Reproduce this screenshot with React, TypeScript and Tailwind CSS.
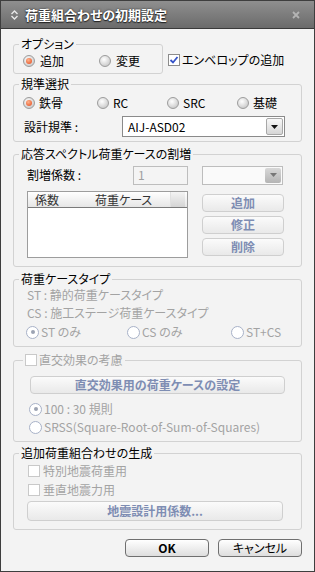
import React from "react";

function Radio({ checked = false, disabled = false }: { checked?: boolean; disabled?: boolean }) {
  if (disabled) {
    return (
      <span className="w-[13px] h-[13px] rounded-full border border-[#a8b2c8] bg-white flex items-center justify-center shrink-0">
        {checked && <span className="w-[4px] h-[4px] rounded-full bg-[#9ca3b3]" />}
      </span>
    );
  }
  return (
    <span className="w-[12px] h-[12px] rounded-full border border-[#9c9c9c] bg-[radial-gradient(circle_at_40%_35%,#ffffff,#bcbcbc)] flex items-center justify-center shrink-0">
      {checked && <span className="w-[6px] h-[6px] rounded-full bg-[radial-gradient(circle_at_40%_35%,#ffb48c,#e2461a)]" />}
    </span>
  );
}

function Check({ checked = false, disabled = false }: { checked?: boolean; disabled?: boolean }) {
  return (
    <span
      className={
        disabled
          ? "w-[12px] h-[12px] border border-[#c9c9c9] bg-white flex items-center justify-center shrink-0"
          : "w-[12px] h-[12px] border border-[#8c8c8c] bg-white flex items-center justify-center shrink-0"
      }
    >
      {checked && (
        <svg width="10" height="10" viewBox="0 0 10 10">
          <path d="M1.5 5 L4 7.5 L8.5 2" fill="none" stroke="#3553c8" strokeWidth="1.8" />
        </svg>
      )}
    </span>
  );
}

function DisabledButton({ children, className }: { children: React.ReactNode; className: string }) {
  return (
    <div
      className={
        "flex items-center justify-center rounded-[4px] border border-[#cfcfcf] bg-linear-to-b from-[#fbfbfb] to-[#e9e9e9] text-[12px] leading-[14px] font-bold text-[#7e8db3] " +
        className
      }
    >
      {children}
    </div>
  );
}

function Arrow({ color }: { color: string }) {
  return (
    <svg width="7" height="4" viewBox="0 0 7 4">
      <path d="M0 0 L7 0 L3.5 4 Z" fill={color} />
    </svg>
  );
}

export default function App() {
  return (
    <div className="w-[315px] h-[572px] border border-[#3e3e3e] bg-[#f3f3f3] flex flex-col font-['Noto_Sans_CJK_JP','Noto_Sans',sans-serif] [font-feature-settings:'palt'] text-[12px] text-black overflow-hidden">
      {/* Title bar */}
      <div className="h-[28px] shrink-0 flex items-center bg-linear-to-b from-[#8f8f8f] to-[#6b6b6b] border-b border-[#3a3a3a] pl-[9px] pr-[9px]">
        <svg width="9" height="12" viewBox="0 0 9 12">
          <path d="M1.5 5 L4.5 2 L7.5 5" fill="none" stroke="#e8e8e8" strokeWidth="1.4" />
          <path d="M1.5 7 L4.5 10 L7.5 7" fill="none" stroke="#e8e8e8" strokeWidth="1.4" />
        </svg>
        <span className="ml-[6px] text-[13px] font-bold text-white leading-none [text-shadow:0_0_2px_#222,0_1px_1px_#222]">
          荷重組合わせの初期設定
        </span>
        <svg className="ml-auto mr-[4px]" width="10" height="10" viewBox="0 0 10 10">
          <path d="M2 2 L8 8 M8 2 L2 8" stroke="#b4b4b4" strokeWidth="1.8" />
        </svg>
      </div>

      <div className="flex flex-col pl-[12px] pr-[12px]">
        {/* Row 1 */}
        <div className="flex items-start mt-[7px]">
          <fieldset className="w-[150px] border border-[#d2d2d2] rounded-[3px]">
            <legend className="ml-[5px] px-[2px] h-[16px] leading-[16px]">オプション</legend>
            <div className="h-[18px] mb-[3px] flex items-center pl-[9px]">
              <div className="w-[76px] flex items-center gap-[5px]">
                <Radio checked />
                <span className="leading-[16px]">追加</span>
              </div>
              <div className="flex items-center gap-[5px]">
                <Radio />
                <span className="leading-[16px]">変更</span>
              </div>
            </div>
          </fieldset>
          <div className="ml-[5px] mt-[15px] h-[18px] flex items-center gap-[2px]">
            <Check checked />
            <span className="leading-[16px]">エンベロップの追加</span>
          </div>
        </div>

        {/* 規準選択 */}
        <fieldset className="mt-[2px] border border-[#d2d2d2] rounded-[3px]">
          <legend className="ml-[5px] px-[2px] h-[16px] leading-[16px]">規準選択</legend>
          <div className="mt-[4px] h-[14px] flex items-center pl-[9px]">
            <div className="w-[74px] flex items-center gap-[4px]">
              <Radio checked />
              <span className="leading-[14px]">鉄骨</span>
            </div>
            <div className="w-[70px] flex items-center gap-[4px]">
              <Radio />
              <span className="leading-[14px]">RC</span>
            </div>
            <div className="w-[70px] flex items-center gap-[4px]">
              <Radio />
              <span className="leading-[14px]">SRC</span>
            </div>
            <div className="flex items-center gap-[4px]">
              <Radio />
              <span className="leading-[14px]">基礎</span>
            </div>
          </div>
          <div className="mt-[6px] mb-[4px] h-[21px] flex items-center pl-[10px]">
            <span className="w-[98px] leading-[16px]">設計規準 :</span>
            <div className="w-[163px] h-[21px] border border-[#8a8a8a] bg-white flex items-center">
              <span className="flex-1 pl-[5px] leading-[16px]">AIJ-ASD02</span>
              <span className="w-[17px] h-[17px] mr-[1px] border border-[#a8a8a8] rounded-[2px] bg-linear-to-b from-[#f8f8f8] to-[#d6d6d6] flex items-center justify-center">
                <Arrow color="#111" />
              </span>
            </div>
          </div>
        </fieldset>

        {/* 応答スペクトル */}
        <fieldset className="mt-[4px] border border-[#d2d2d2] rounded-[3px]">
          <legend className="ml-[5px] px-[2px] h-[16px] leading-[16px]">応答スペクトル荷重ケースの割増</legend>
          <div className="mt-[4px] h-[18px] flex items-center pl-[13px]">
            <span className="w-[106px] leading-[16px]">割増係数 :</span>
            <div className="w-[55px] h-[19px] border border-[#bdbdbd] bg-[#f4f4f4] flex items-center pl-[4px] leading-[16px] text-[#a0a0a0]">1</div>
            <div className="ml-[14px] w-[81px] h-[19px] border border-[#bdbdbd] bg-[#fafafa] flex items-center justify-end">
              <span className="w-[16px] h-[15px] mr-[1px] rounded-[2px] bg-linear-to-b from-[#d8d8d8] to-[#b4b4b4] flex items-center justify-center">
                <Arrow color="#777" />
              </span>
            </div>
          </div>
          <div className="mt-[7px] mb-[8px] flex items-start pl-[13px]">
            <div className="w-[161px] h-[67px] border border-[#9d9d9d] bg-white">
              <div className="h-[16px] flex items-stretch border-b border-[#7a7a7a] bg-linear-to-b from-[#ffffff] to-[#e6e6e6]">
                <span className="w-[59px] pl-[7px] leading-[15px] text-[#333]">係数</span>
                <span className="w-[83px] pl-[8px] leading-[15px] text-[#333]">荷重ケース</span>
                <span className="w-[15px] bg-linear-to-b from-[#f4f4f4] to-[#d4d4d4] border-l border-[#e0e0e0]" />
              </div>
            </div>
            <div className="ml-[14px] mt-[3px] w-[82px] flex flex-col gap-[4px]">
              <DisabledButton className="h-[18px]">追加</DisabledButton>
              <DisabledButton className="h-[18px]">修正</DisabledButton>
              <DisabledButton className="h-[18px]">削除</DisabledButton>
            </div>
          </div>
        </fieldset>

        {/* 荷重ケースタイプ */}
        <fieldset className="mt-[4px] border border-[#d2d2d2] rounded-[3px] text-[#a3a3a3]">
          <legend className="ml-[5px] px-[2px] h-[16px] leading-[16px] text-black">荷重ケースタイプ</legend>
          <div className="h-[16px] leading-[16px] pl-[13px]">ST : 静的荷重ケースタイプ</div>
          <div className="mt-[2px] h-[16px] leading-[16px] pl-[13px]">CS : 施工ステージ荷重ケースタイプ</div>
          <div className="mt-[3px] mb-[6px] h-[16px] flex items-center pl-[12px]">
            <div className="w-[101px] flex items-center gap-[2px]">
              <Radio checked disabled />
              <span className="leading-[16px]">ST のみ</span>
            </div>
            <div className="w-[104px] flex items-center gap-[2px]">
              <Radio disabled />
              <span className="leading-[16px]">CS のみ</span>
            </div>
            <div className="flex items-center gap-[2px]">
              <Radio disabled />
              <span className="leading-[16px]">ST+CS</span>
            </div>
          </div>
        </fieldset>

        {/* 直交効果の考慮 */}
        <fieldset className="mt-[5px] border border-[#d2d2d2] rounded-[3px] text-[#a3a3a3]">
          <legend className="ml-[9px] px-[2px] h-[16px] flex items-center gap-[2px]">
            <Check disabled />
            <span className="leading-[16px]">直交効果の考慮</span>
          </legend>
          <DisabledButton className="mt-[8px] ml-[16px] w-[255px] h-[18px]">直交効果用の荷重ケースの設定</DisabledButton>
          <div className="mt-[7px] h-[16px] flex items-center pl-[15px] gap-[2px]">
            <Radio checked disabled />
            <span className="leading-[16px]">100 : 30 規則</span>
          </div>
          <div className="mt-[2px] mb-[6px] h-[16px] flex items-center pl-[15px] gap-[2px]">
            <Radio disabled />
            <span className="leading-[16px]">SRSS(Square-Root-of-Sum-of-Squares)</span>
          </div>
        </fieldset>

        {/* 追加荷重組合わせの生成 */}
        <fieldset className="mt-[3px] border border-[#d2d2d2] rounded-[3px] text-[#a3a3a3]">
          <legend className="ml-[5px] px-[2px] h-[16px] leading-[16px] text-black">追加荷重組合わせの生成</legend>
          <div className="mt-[2px] h-[16px] flex items-center pl-[14px] gap-[3px]">
            <Check disabled />
            <span className="leading-[16px]">特別地震荷重用</span>
          </div>
          <div className="mt-[3px] h-[16px] flex items-center pl-[14px] gap-[3px]">
            <Check disabled />
            <span className="leading-[16px]">垂直地震力用</span>
          </div>
          <DisabledButton className="mt-[3px] mb-[8px] ml-[13px] w-[256px] h-[20px]">地震設計用係数...</DisabledButton>
        </fieldset>

        {/* OK / Cancel */}
        <div className="mt-[9px] flex justify-end gap-[9px]">
          <div className="w-[84px] h-[18px] rounded-[4px] border border-[#6f6f6f] bg-linear-to-b from-[#ffffff] to-[#dedede] flex items-center justify-center font-bold leading-[14px]">
            OK
          </div>
          <div className="w-[84px] h-[18px] rounded-[4px] border border-[#6f6f6f] bg-linear-to-b from-[#ffffff] to-[#dedede] flex items-center justify-center leading-[14px]">
            キャンセル
          </div>
        </div>
      </div>
    </div>
  );
}
